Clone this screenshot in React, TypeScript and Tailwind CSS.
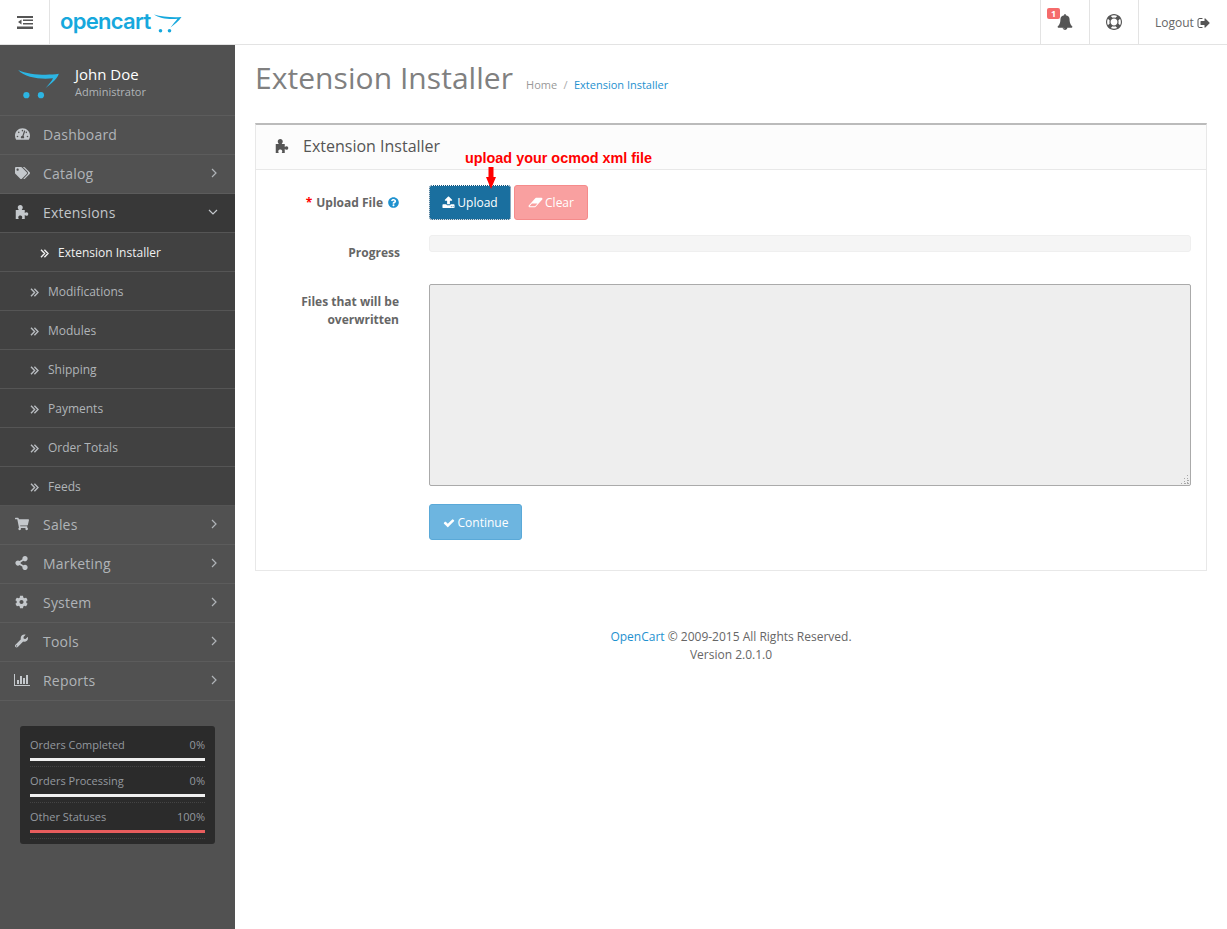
import React from "react";
import { FaTachometerAlt, FaTags, FaShoppingCart, FaShareAlt, FaCog, FaWrench, FaQuestionCircle } from "react-icons/fa";

type IP = { className?: string };
const G = ({ d, vb = "0 0 1792 1792", className = "" }: { d: string; vb?: string; className?: string }) => (
  <svg viewBox={vb} className={className} fill="currentColor"><path d={d} /></svg>
);
const Bars = ({ className = "" }: IP) => <G className={className} vb="0 0 2048 1792" d="M640 896v512h-256v-512h256zm384-512v1024h-256v-1024h256zm1024 1152v128h-2048v-1536h128v1408h1920zm-640-896v768h-256v-768h256zm384-384v1152h-256v-1152h256z" />;
const Puzzle = ({ className = "" }: IP) => <G className={className} vb="2.500 0 13.500 14" d="M3 5h3c-.5-1-1-1.500-1-2.500C5 1 6 0 7.500 0S10 1 10 2.500C10 3.500 9.500 4 9 5h3v3c.5-.5 1-.8 1.800-.8C14.900 7.200 15.500 8 15.500 9s-.6 1.800-1.700 1.800c-.8 0-1.300-.3-1.800-.8v4H9c.3-.8.5-1.200.5-1.800 0-1.200-1-1.700-2-1.700s-2 .5-2 1.700c0 .6.2 1 .5 1.800H3z" />;
const Bell = ({ className = "" }: IP) => <G className={className} d="M912 1696q0-16-16-16-59 0-101.500-42.500t-42.500-101.500q0-16-16-16t-16 16q0 73 51.500 124.500t124.500 51.500q16 0 16-16zm816-288q0 52-38 90t-90 38h-448q0 106-75 181t-181 75-181-75-75-181h-448q-52 0-90-38t-38-90q50-42 91-88t85-119.500 74.500-158.500 50-206 19.500-260q0-152 117-282.500t307-158.500q-8-19-8-39 0-40 28-68t68-28 68 28 28 68q0 20-8 39 190 28 307 158.500t117 282.500q0 139 19.500 260t50 206 74.500 158.500 85 119.500 91 88z" />;
const Ring = ({ className = "" }: IP) => <G className={className} d="M896 0q182 0 348 71t286 191 191 286 71 348-71 348-191 286-286 191-348 71-348-71-286-191-191-286-71-348 71-348 191-286 286-191 348-71zm0 128q-190 0-361 90l194 194q82-28 167-28t167 28l194-194q-171-90-361-90zm-678 1129l194-194q-28-82-28-167t28-167l-194-194q-90 171-90 361t90 361zm678 407q190 0 361-90l-194-194q-82 28-167 28t-167-28l-194 194q171 90 361 90zm0-384q159 0 271.500-112.500t112.500-271.500-112.500-271.500-271.500-112.500-271.500 112.500-112.500 271.500 112.500 271.500 271.500 112.500zm484-217l194 194q90-171 90-361t-90-361l-194 194q28 82 28 167t-28 167z" />;
const SignOut = ({ className = "" }: IP) => <G className={className} d="M704 1440q0 4 1 20t.5 26.500-3 23.500-10 19.500-20.500 6.500h-320q-119 0-203.500-84.500t-84.500-203.500v-704q0-119 84.500-203.500t203.500-84.500h320q13 0 22.500 9.500t9.500 22.500q0 4 1 20t.5 26.500-3 23.500-10 19.500-20.500 6.500h-320q-66 0-113 47t-47 113v704q0 66 47 113t113 47h312l11.500 1 11.500 3 8 5.500 7 9 2 13.500zm928-544q0 26-19 45l-544 544q-19 19-45 19t-45-19-19-45v-288h-448q-26 0-45-19t-19-45v-384q0-26 19-45t45-19h448v-288q0-26 19-45t45-19 45 19l544 544q19 19 19 45z" />;
const Upload = ({ className = "" }: IP) => <G className={className} d="M1344 1472q0-26-19-45t-45-19-45 19-19 45 19 45 45 19 45-19 19-45zm256 0q0-26-19-45t-45-19-45 19-19 45 19 45 45 19 45-19 19-45zm128-224v320q0 40-28 68t-68 28h-1472q-40 0-68-28t-28-68v-320q0-40 28-68t68-28h427q21 56 70.500 92t110.500 36h256q61 0 110.500-36t70.500-92h427q40 0 68 28t28 68zm-325-648q-17 40-59 40h-256v448q0 26-19 45t-45 19h-256q-26 0-45-19t-19-45v-448h-256q-42 0-59-40-17-39 14-69l448-448q18-19 45-19t45 19l448 448q31 30 14 69z" />;
const Eraser = ({ className = "" }: IP) => <G className={className} vb="0 0 2048 1792" d="M960 1408l336-384h-768l-336 384h768zm1013-1077q15 34 9.500 71.500t-30.500 65.500l-896 1024q-38 44-96 44h-768q-38 0-69.500-20.500t-47.500-54.500q-15-34-9.500-71.500t30.500-65.500l896-1024q38-44 96-44h768q38 0 70 20.500t47 54.500z" />;
const Check = ({ className = "" }: IP) => <G className={className} d="M1671 566q0 40-28 68l-724 724-136 136q-28 28-68 28t-68-28l-136-136-362-362q-28-28-28-68t28-68l136-136q28-28 68-28t68 28l294 295 656-657q28-28 68-28t68 28l136 136q28 28 28 68z" />;

const AngleRight = ({ className = "" }: IP) => (
  <svg viewBox="0 0 6 10" className={`w-[6px] h-[10px] ${className}`} fill="none" stroke="currentColor" strokeWidth="1.200"><path d="M1 1l4 4-4 4" /></svg>
);
const AngleDown = ({ className = "" }: IP) => (
  <svg viewBox="0 0 10 6" className={`w-[10px] h-[6px] ${className}`} fill="none" stroke="currentColor" strokeWidth="1.200"><path d="M1 1l4 4 4-4" /></svg>
);
const AngleDouble = ({ className = "" }: IP) => (
  <svg viewBox="0 0 9 9" className={`w-[9px] h-[9px] ${className}`} fill="none" stroke="currentColor" strokeWidth="1.400"><path d="M1 .8l3.600 3.700L1 8.200M4.400 .8L8 4.500 4.400 8.200" /></svg>
);

const Dedent = () => (
  <svg viewBox="0 0 16 13" className="w-4 h-[13px] text-[#555]" fill="currentColor">
    <path d="M0 0h16v2H0zM6 3.500h10v1.500H6zM6 7h10v1.500H6zM0 10.500h16V13H0z" />
    <path d="M4.500 3.500v5L1 6z" />
  </svg>
);

const Grip = () => (
  <svg viewBox="0 0 10 10" className="absolute right-[2px] bottom-[1px] w-[10px] h-[10px] pointer-events-none" fill="#a8a8a8">
    <path d="M8 0h1v1H8zM8 3h1v1H8zM5 3h1v1H5zM8 5h2v1H8zM5 6h1v1H5zM8 7h1v1H8zM2 8h1v1H2zM5 8h2v1H5zM8 8h2v1H8z" />
  </svg>
);

const Logo = () => (
  <div className="flex items-center">
    <span className="font-['Inter',sans-serif] text-[22px] font-semibold leading-none text-[#16a8dd] tracking-[-0.7px] -mt-[3px]">opencart</span>
    <svg viewBox="0 0 28 19" className="w-[28px] h-[19px] mt-[3px] ml-[3px]">
      <path d="M0 .5C8 3 18 3.500 27.500 3 25 7 20 10.500 16.500 13.500 19 10 22 7 23.500 4.800 15 5.500 5 4.500 0 .5Z" fill="#16a8dd" />
      <circle cx="6.500" cy="16.800" r="1.800" fill="#16a8dd" />
      <circle cx="15.500" cy="16.800" r="1.800" fill="#16a8dd" />
    </svg>
  </div>
);

const top = [
  { label: "Dashboard", Icon: FaTachometerAlt },
  { label: "Catalog", Icon: FaTags, arrow: true },
];
const bottom = [
  { label: "Sales", Icon: FaShoppingCart, w: "w-[14px]" },
  { label: "Marketing", Icon: FaShareAlt, w: "w-[13px]" },
  { label: "System", Icon: FaCog, w: "w-[13px]" },
  { label: "Tools", Icon: FaWrench, w: "w-[13px]" },
  { label: "Reports", Icon: Bars, w: "w-[16px] -ml-[1px]" },
];
const subs = ["Modifications", "Modules", "Shipping", "Payments", "Order Totals", "Feeds"];

function NavRow({ label, Icon, arrow, down, active, w = "w-[15px]" }: any) {
  return (
    <div className={`flex items-center h-[39px] border-b pb-[2px] pl-[15px] pr-[17px] text-[14px] tracking-[0.015em] ${active ? "bg-[#383838] border-[#555] text-[#c2c6ca]" : "border-[#5c5c5c] text-[#b0b4b8]"}`}>
      <span className="w-[28px] shrink-0 flex items-center">
        <Icon className={`${w} h-[14px] text-[#c4c8cc]`} />
      </span>
      <span className="flex-1">{label}</span>
      {arrow && <AngleRight className="text-[#b0b4b8] mr-[1px]" />}
      {down && <AngleDown className="text-[#c4c8cc]" />}
    </div>
  );
}

function Stat({ label, value, bar }: { label: string; value: string; bar: string }) {
  return (
    <div className="h-[36px] pt-[6px] border-b border-dotted border-[#444]">
      <div className="flex justify-between text-[11px] leading-[15px] text-[#94999f]">
        <span>{label}</span>
        <span>{value}</span>
      </div>
      <div className={`h-[3px] mt-[6px] ${bar}`} />
    </div>
  );
}

export default function App() {
  return (
    <div className="min-h-[929px] flex flex-col bg-white font-['Open_Sans',sans-serif] text-[#666]">
      <header className="h-[45px] flex items-stretch border-b border-[#e3e3e3] bg-white">
        <div className="w-[50px] border-r border-[#e3e3e3] flex items-center justify-center">
          <Dedent />
        </div>
        <div className="flex-1 pl-[10px] flex items-center">
          <Logo />
        </div>
        <div className="w-[49px] border-l border-[#e3e3e3] relative flex items-center justify-center">
          <Bell className="w-[16px] h-[16px] text-[#555]" />
          <span className="absolute left-[6px] top-[8px] w-[13px] h-[11px] rounded-[2px] bg-[#f56b6b] text-white text-[9px] font-bold leading-[11px] text-center">1</span>
        </div>
        <div className="w-[49px] border-l border-[#e3e3e3] flex items-center justify-center">
          <Ring className="w-[16px] h-[16px] text-[#555]" />
        </div>
        <div className="w-[89px] border-l border-[#e3e3e3] flex items-center pl-[16px] pt-[1px] text-[12px] text-[#666]">
          Logout
          <SignOut className="w-[14px] h-[14px] ml-[3px] text-[#555]" />
        </div>
      </header>

      <div className="flex flex-1">
        <aside className="w-[235px] shrink-0 bg-[#515151]">
          <div className="h-[71px] border-b border-[#5c5c5c] flex items-center pl-[17px]">
            <svg viewBox="0 0 44 32" className="w-[43px] h-[31px] mt-[9px]">
              <path d="M1 1C12 6 30 7 43 5 41 11 34 16 29 20 33 15 36 12 37 9.500 25 11 8 9 1 1Z" fill="#2cb5e3" />
              <circle cx="9.500" cy="27" r="3.200" fill="#2cb5e3" />
              <circle cx="24.500" cy="27" r="3.200" fill="#2cb5e3" />
            </svg>
            <div className="ml-[15px] pt-[3px]">
              <div className="text-[15px] leading-[20px] text-white">John Doe</div>
              <div className="text-[11px] leading-[15px] text-[#b0b4b8]">Administrator</div>
            </div>
          </div>
          {top.map((r) => <NavRow key={r.label} {...r} />)}
          <NavRow label="Extensions" Icon={Puzzle} w="w-[14px]" down active />
          <div className="bg-[#414141]">
            <div className="flex items-center h-[39px] border-b border-[#555] pt-[2px] pl-[40px] text-[12px] text-[#f0f0f0]">
              <AngleDouble className="mr-[9px] text-[#f0f0f0]" />
              Extension Installer
            </div>
            {subs.map((s) => (
              <div key={s} className="flex items-center h-[39px] border-b border-[#555] pt-[2px] pl-[30px] text-[12px] text-[#b0b4b8]">
                <AngleDouble className="mr-[9px] text-[#b8bcc0]" />
                {s}
              </div>
            ))}
          </div>
          {bottom.map((r) => <NavRow key={r.label} {...r} arrow />)}
          <div className="mx-[20px] mt-[25px] rounded-[3px] bg-[#2b2b2b] px-[10px] py-[5px]">
            <Stat label="Orders Completed" value="0%" bar="bg-[#f0f0f0]" />
            <Stat label="Orders Processing" value="0%" bar="bg-[#f0f0f0]" />
            <Stat label="Other Statuses" value="100%" bar="bg-[#e95d5d]" />
          </div>
        </aside>

        <main className="flex-1 px-[20px]">
          <div className="flex items-baseline h-[78px] pt-[12px]">
            <h1 className="text-[30px] leading-[42px] text-[#808080] tracking-[0.05px]">Extension Installer</h1>
            <div className="ml-[13px] text-[11px] text-[#999]">
              Home <span className="text-[#aaa] mx-[3.500px]">/</span> <span className="text-[#1e91cf]">Extension Installer</span>
            </div>
          </div>

          <section className="border border-[#e8e8e8] border-t-2 border-t-[#bbb] bg-white h-[448px]">
            <div className="h-[45px] pb-[2px] bg-[#fcfcfc] border-b border-[#e8e8e8] flex items-center pl-[19px] text-[16px] text-[#555]">
              <Puzzle className="w-[14px] h-[14px] text-[#555] mr-[14px]" />
              Extension Installer
            </div>
            <div className="relative pl-[173px] pr-[15px] pt-[15px]">
              <span className="absolute left-[209px] -top-[20px] font-['Liberation_Sans',sans-serif] text-[14.400px] leading-[16px] font-bold text-[#f00] whitespace-nowrap">upload your ocmod xml file</span>
              <svg viewBox="0 0 10 22" className="absolute left-[230px] -top-[3px] w-[10px] h-[22px] z-10">
                <path d="M2.500 0h5v10H10L5 22 0 10h2.500z" fill="#f00" />
              </svg>
              <div className="flex items-center h-[35px] gap-[3px] relative">
                <div className="absolute right-[calc(100%+30px)] top-0 h-full flex items-center whitespace-nowrap text-[12px] font-bold text-[#666]">
                  <span className="text-[#f00] mr-[4px]">*</span>Upload File
                  <FaQuestionCircle className="w-[11px] h-[11px] ml-[5px] text-[#1e91cf]" />
                </div>
                <button className="h-[35px] w-[82px] rounded-[3px] bg-[#1a6f9f] outline-1 outline-dotted outline-white -outline-offset-1 border border-[#14527a] text-white text-[12px] flex items-center justify-center">
                  <Upload className="w-[13px] h-[13px] mr-[2px]" />Upload
                </button>
                <button className="h-[35px] w-[74px] rounded-[3px] bg-[#f9a0a0] border border-[#f58b8b] text-white text-[12px] flex items-center justify-center">
                  <Eraser className="w-[15px] h-[13px] mr-[2px]" />Clear
                </button>
              </div>
              <div className="relative mt-[15px] h-[17px] rounded-[3px] bg-[#f5f5f5] border border-[#efefef]">
                <div className="absolute right-[calc(100%+30px)] top-[9px] h-full flex items-center whitespace-nowrap text-[12px] font-bold text-[#666]">Progress</div>
              </div>
              <div className="relative mt-[32px]">
                <div className="absolute right-[calc(100%+30px)] top-[9px] w-[120px] text-right text-[12px] leading-[18px] font-bold text-[#666]">Files that will be overwritten</div>
                <textarea disabled className="block w-full h-[202px] resize-none rounded-[2px] bg-[#eee] border border-[#aaa]"></textarea>
                <Grip />
              </div>
              <button className="mt-[18px] pt-[1px] h-[36px] w-[93px] rounded-[3px] bg-[#6db5e0] border border-[#5aa9d8] text-white text-[12px] flex items-center justify-center">
                <Check className="w-[12px] h-[12px] mr-[3px]" />Continue
              </button>
            </div>
          </section>

          <footer className="mt-[57px] text-center text-[12px] leading-[18px] text-[#666]">
            <div><span className="text-[#1e91cf]">OpenCart</span> © 2009-2015 All Rights Reserved.</div>
            <div>Version 2.0.1.0</div>
          </footer>
        </main>
      </div>
    </div>
  );
}
